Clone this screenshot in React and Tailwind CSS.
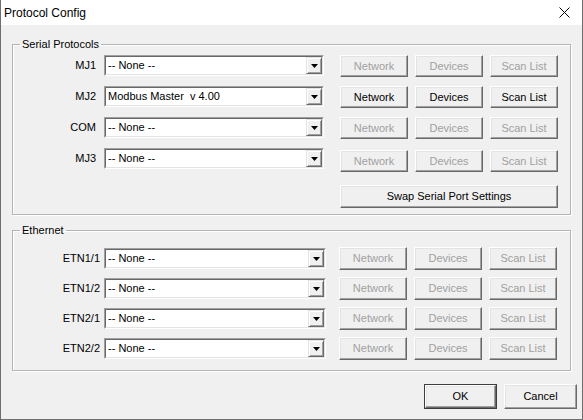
import React from "react";

function Btn({ children, disabled, className = "" }) {
  return (
    <div
      className={`flex items-center justify-center bg-[#f0f0f0] border border-t-white border-l-white border-r-[#696969] border-b-[#696969] shadow-[inset_-1px_-1px_0_#a0a0a0,inset_1px_1px_0_#e3e3e3] text-[11px] leading-none ${
        disabled ? "text-[#a0a0a0]" : "text-black"
      } ${className}`}
    >
      {children}
    </div>
  );
}

function Combo({ value, width }) {
  return (
    <div
      className={`flex h-[21px] border border-t-[#a0a0a0] border-l-[#a0a0a0] border-r-white border-b-white ${width}`}
    >
      <div className="flex flex-1 min-w-0 border border-t-[#696969] border-l-[#696969] border-r-[#e3e3e3] border-b-[#e3e3e3] bg-white">
        <span className="flex-1 pl-[2px] text-[11px] leading-[17px] text-black whitespace-pre">
          {value}
        </span>
        <div className="flex w-[16px] items-center justify-center bg-[#f0f0f0] border border-t-[#e3e3e3] border-l-[#e3e3e3] border-r-[#696969] border-b-[#696969] shadow-[inset_1px_1px_0_#fff,inset_-1px_-1px_0_#a0a0a0]">
          <svg width="7" height="4" viewBox="0 0 7 4">
            <polygon points="0,0 7,0 3.5,4" fill="#000" />
          </svg>
        </div>
      </div>
    </div>
  );
}

function Buttons({ disabled, className = "" }) {
  return (
    <div className={`flex gap-[7px] ${className}`}>
      <Btn disabled={disabled} className="w-[68px] h-full">Network</Btn>
      <Btn disabled={disabled} className="w-[68px] h-full">Devices</Btn>
      <Btn disabled={disabled} className="w-[68px] h-full">Scan List</Btn>
    </div>
  );
}

const serial = [
  { label: "MJ1", value: "-- None --", disabled: true },
  { label: "MJ2", value: "Modbus Master  v 4.00", disabled: false },
  { label: "COM", value: "-- None --", disabled: true },
  { label: "MJ3", value: "-- None --", disabled: true },
];

const ether = ["ETN1/1", "ETN1/2", "ETN2/1", "ETN2/2"];

export default function App() {
  return (
    <div className="w-[583px] h-[420px] flex flex-col bg-[#f0f0f0] border-x border-b border-[#6e6e6e] font-['Liberation_Sans',Arial,sans-serif] text-black overflow-hidden">
      <div className="h-[25px] shrink-0 bg-white flex items-center justify-between pl-[3px] pr-[12px]">
        <span className="text-[12px] leading-none text-black">Protocol Config</span>
        <svg width="11" height="11" viewBox="0 0 11 11">
          <path d="M0.5 0.5 L10.5 10.5 M10.5 0.5 L0.5 10.5" stroke="#000" strokeWidth="1" />
        </svg>
      </div>

      <fieldset className="ml-[11px] mt-[13px] w-[559px] border border-[#b4b4b4] pt-[4px] pb-[6px] shadow-[inset_1px_1px_0_#fff,1px_1px_0_#fff]">
        <legend className="ml-[7px] px-[2px] text-[11px] leading-[13px]">Serial Protocols</legend>
        <div className="flex flex-col gap-[9px]">
          {serial.map((r, i) => (
            <div key={r.label} className="flex items-start h-[22px]">
              <div className="w-[83px] text-right text-[11px] leading-[21px]">{r.label}</div>
              <div className="ml-[8px]">
                <Combo value={r.value} width="w-[220px]" />
              </div>
              <Buttons
                disabled={r.disabled}
                className={`ml-[16px] h-[22px] ${i === 3 ? "mt-[2px]" : ""}`}
              />
            </div>
          ))}
        </div>
        <div className="flex mt-[15px]">
          <Btn className="ml-[327px] w-[218px] h-[23px]">Swap Serial Port Settings</Btn>
        </div>
      </fieldset>

      <fieldset className="ml-[11px] mt-[9px] w-[559px] border border-[#b4b4b4] pt-[10px] pb-[10px] shadow-[inset_1px_1px_0_#fff,1px_1px_0_#fff]">
        <legend className="ml-[7px] px-[2px] text-[11px] leading-[13px]">Ethernet</legend>
        <div className="flex flex-col gap-[7px]">
          {ether.map((l) => (
            <div key={l} className="flex items-center h-[23px]">
              <div className="w-[87px] text-right text-[11px] leading-[21px]">{l}</div>
              <div className="ml-[4px]">
                <Combo value="-- None --" width="w-[222px]" />
              </div>
              <Buttons disabled className="ml-[13px] h-[23px]" />
            </div>
          ))}
        </div>
      </fieldset>

      <div className="flex justify-end gap-[7px] mt-[13px] pr-[5px]">
        <div className="w-[73px] h-[25px] border border-[#3c3c3c] flex">
          <Btn className="flex-1">OK</Btn>
        </div>
        <Btn className="w-[73px] h-[25px]">Cancel</Btn>
      </div>
    </div>
  );
}
